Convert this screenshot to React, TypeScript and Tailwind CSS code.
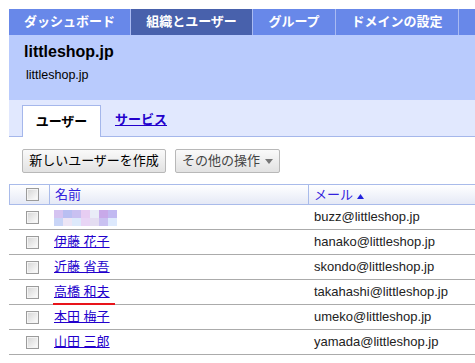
const navItems = [
  { label: "ダッシュボード", w: "w-[121px]", active: false, first: true },
  { label: "組織とユーザー", w: "w-[122px]", active: true, first: false },
  { label: "グループ", w: "w-[83px]", active: false, first: false },
  { label: "ドメインの設定", w: "w-[123px]", active: false, first: false },
  { label: "レポート", w: "w-[90px]", active: false, first: false },
];

const users = [
  { name: "", email: "buzz@littleshop.jp", blurred: true },
  { name: "伊藤 花子", email: "hanako@littleshop.jp" },
  { name: "近藤 省吾", email: "skondo@littleshop.jp" },
  { name: "高橋 和夫", email: "takahashi@littleshop.jp", marked: true },
  { name: "本田 梅子", email: "umeko@littleshop.jp" },
  { name: "山田 三郎", email: "yamada@littleshop.jp" },
];

const blurColors = [
  "bg-[#d5c3f1]", "bg-[#b9bff2]", "bg-[#c9c0f1]", "bg-[#e7cdf2]", "bg-[#e9ecf7]", "bg-[#c8a9e9]", "bg-[#c1b9f1]",
  "bg-[#c9d5f7]", "bg-[#ede5f5]", "bg-[#dde9fb]", "bg-[#e8d5f5]", "bg-[#e4ddf1]", "bg-[#c9c1f1]", "bg-[#dde9fd]",
];

function Checkbox() {
  return (
    <span className="block w-[13px] h-[13px] border border-[#9b9b9b] bg-[#f4f4f4] p-[1px]">
      <span className="block w-full h-full bg-gradient-to-br from-[#d8d8d8] to-[#fbfbfb]" />
    </span>
  );
}

export default function App() {
  return (
    <div className="w-[475px] h-[363px] overflow-hidden bg-white pl-[9px] pt-[9px] font-['Liberation_Sans','Noto_Sans_CJK_JP',sans-serif] text-[13px] text-[#222]">
      <div className="w-[480px]">
        {/* top nav */}
        <div className="flex h-[26px] bg-[#6888e9] overflow-hidden">
          {navItems.map((item) => (
            <div
              key={item.label}
              className={`${item.w} shrink-0 flex items-center justify-center text-white font-bold text-[13px] ${item.first ? "" : "border-l border-[#a9baf2]"} ${item.active ? "bg-[#4861ac]" : ""}`}
            >
              {item.label}
            </div>
          ))}
        </div>

        {/* org header */}
        <div className="h-[65px] bg-[#b9cbfd] pl-[15px] pt-[7px]">
          <div className="text-[16px] font-bold text-black leading-[20px]">littleshop.jp</div>
          <div className="text-[12.5px] text-black leading-[16px] mt-[5px] pl-[2px]">littleshop.jp</div>
        </div>

        {/* tabs */}
        <div className="h-[37px] bg-[#e1e8fe] border-b border-[#a5b7eb] flex items-end pl-[13px]">
          <div className="w-[79px] h-[32px] -mb-px bg-white border border-b-0 border-[#a5b7eb] flex items-center justify-center font-bold text-black">
            ユーザー
          </div>
          <div className="ml-[14px] h-[32px] flex items-center font-bold text-[#2200cc] underline">
            サービス
          </div>
        </div>

        {/* buttons */}
        <div className="flex gap-[9px] pl-[13px] pt-[12px] h-[47px]">
          <button className="h-[24px] w-[144px] border border-[#b8b8b8] rounded-[2px] bg-gradient-to-b from-[#fafafa] to-[#e2e2e2] text-black text-[13px]">
            新しいユーザーを作成
          </button>
          <button className="h-[24px] w-[105px] border border-[#b8b8b8] rounded-[2px] bg-gradient-to-b from-[#fafafa] to-[#e2e2e2] text-[#444] text-[13px] flex items-center justify-center gap-[5px]">
            その他の操作
            <svg width="8" height="5" viewBox="0 0 8 5">
              <path d="M0 0 L8 0 L4 5 Z" fill="#777" />
            </svg>
          </button>
        </div>

        {/* table */}
        <div>
          <div className="flex h-[21px] border-y border-l border-[#a9bbea] bg-gradient-to-b from-white to-[#e5e9f6]">
            <div className="w-[39px] pl-[16px] flex items-center">
              <Checkbox />
            </div>
            <div className="w-[259px] border-l border-[#a9bbea] pl-[5px] flex items-center text-[#3322dd]">
              名前
            </div>
            <div className="flex-1 border-l border-[#a9bbea] pl-[5px] flex items-center gap-[4px] text-[#3322dd]">
              メール
              <svg width="7" height="5" viewBox="0 0 7 5" className="mt-[3px]">
                <path d="M0 5 L7 5 L3.5 0 Z" fill="#2222dd" />
              </svg>
            </div>
          </div>
          {users.map((u) => (
            <div key={u.email} className="flex h-[25px] border-b border-[#ababab]">
              <div className="w-[40px] pl-[17px] flex items-center">
                <Checkbox />
              </div>
              <div className="w-[259px] pl-[5px] flex items-center relative">
                {u.blurred ? (
                  <div className="grid grid-cols-7 w-[63px] mt-[1px]">
                    {blurColors.map((c, i) => (
                      <span key={i} className={`${c} block h-[8px] ${i < 7 ? "" : "h-[7px]"}`} />
                    ))}
                  </div>
                ) : (
                  <span className="text-[#2200cc] underline">{u.name}</span>
                )}
                {u.marked && (
                  <span className="absolute left-[4px] top-[23px] w-[62px] h-[2px] bg-[#e8141a]" />
                )}
              </div>
              <div className="flex-1 pl-[6px] flex items-center text-[#222]">{u.email}</div>
            </div>
          ))}
        </div>
      </div>
    </div>
  );
}
